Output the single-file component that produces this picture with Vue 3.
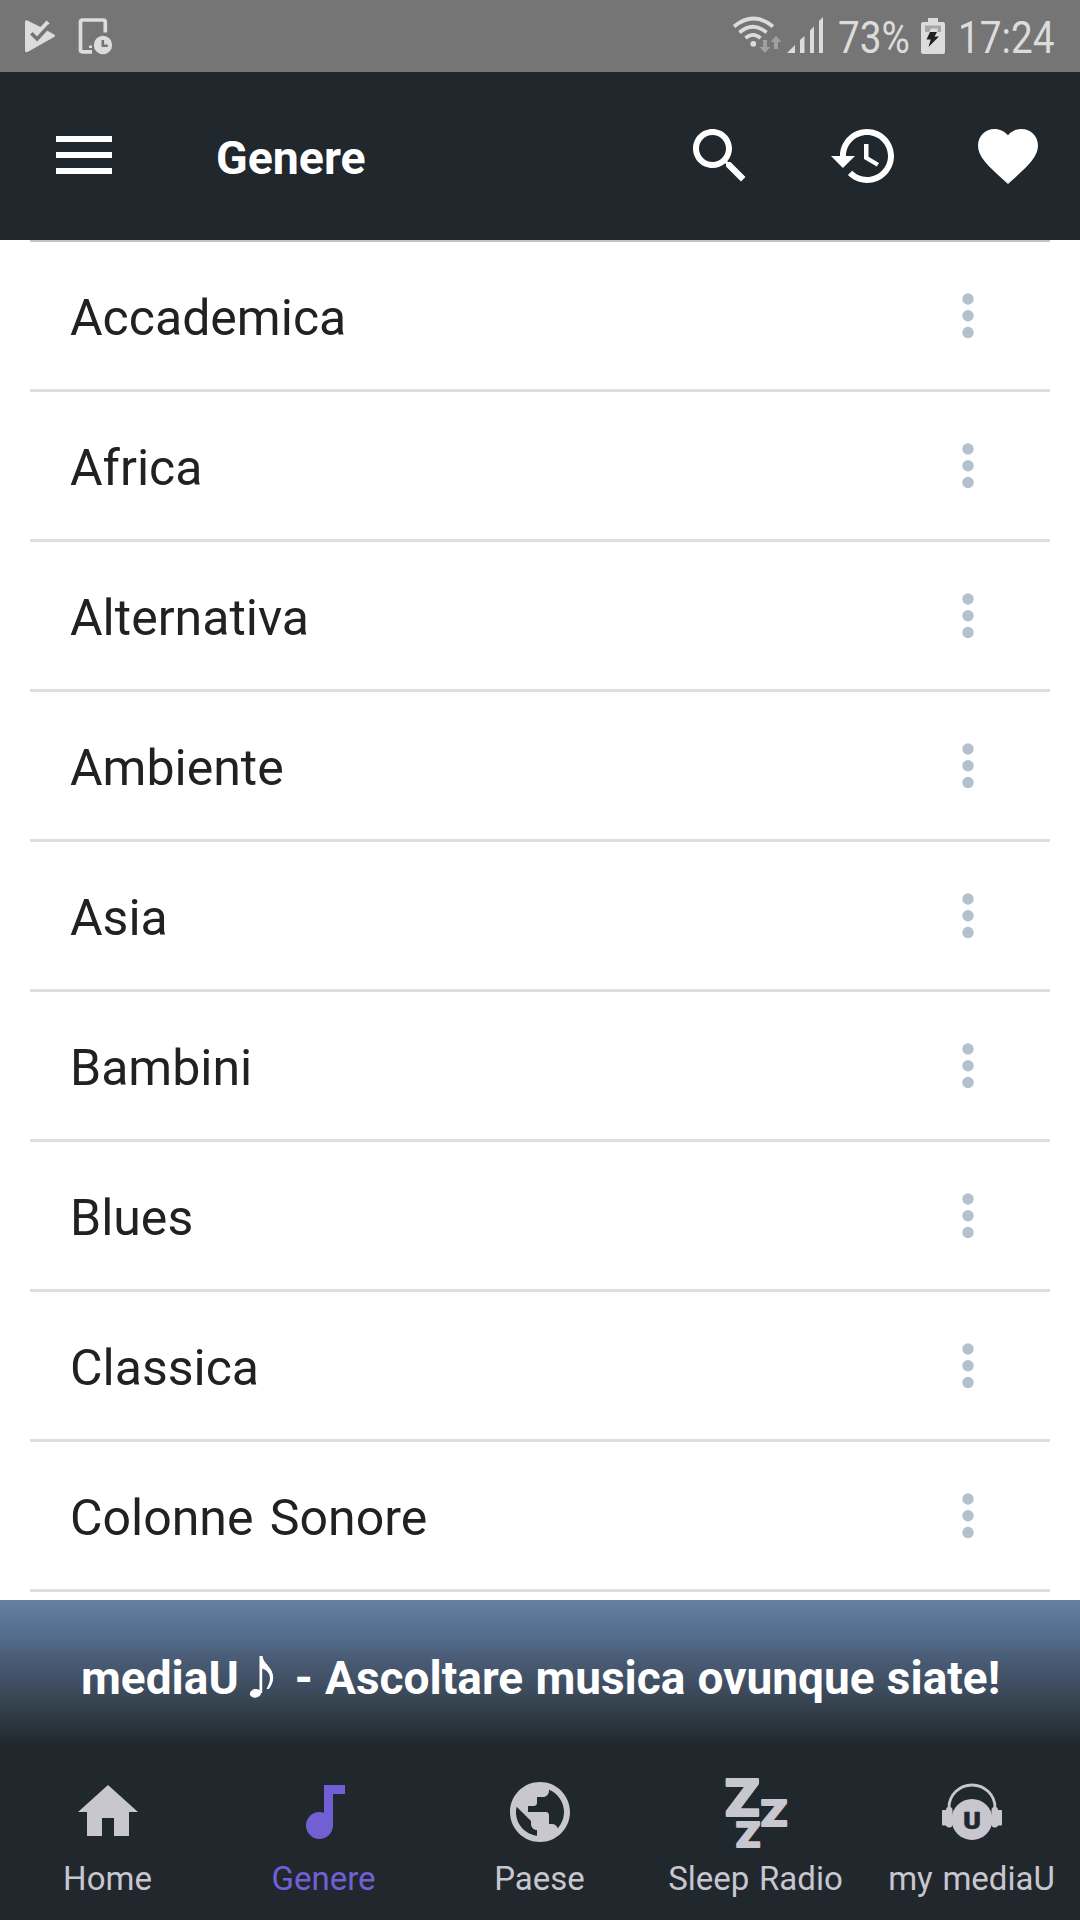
<template>
  <div class="app">
    <div class="status-bar">
      <svg class="status-left" width="120" height="72" viewBox="0 0 120 72">
        <path fill="#dcdcdc" d="M25 22q0-2.500 2.500-1.500L40.500 27l6-6.500 3 2.700-5 8.300 3-.8 7 4q1 1 0 2L28 51.800q-3 1.200-3-1.300z" />
        <path d="M31.300 33.300l5.800 5.700L49.500 25.500" fill="none" stroke="#757575" stroke-width="3.600" />
        <path d="M105.300 32.500v-10.500q0-2-2-2H82.500q-2 0-2 2V49.800q0 2 2 2H92" fill="none" stroke="#dcdcdc" stroke-width="3.700" />
        <circle cx="103" cy="45" r="9.200" fill="#dcdcdc" />
        <path d="M102.800 40v5.800h5" fill="none" stroke="#757575" stroke-width="2.600" />
        <rect x="89" y="45.500" width="3" height="2.500" fill="#dcdcdc" />
      </svg>
      <div class="status-right">
        <svg width="92" height="72" viewBox="732 0 92 72">
          <g fill="none" stroke="#dcdcdc" stroke-width="3.700">
            <path d="M734 26.500q19.500-16 39 0" />
            <path d="M739.500 32.500q13.500-11.500 27 0" />
            <path d="M745.500 38.200q7.500-6.500 15 0" />
          </g>
          <circle cx="753.300" cy="43.800" r="2.900" fill="#dcdcdc" />
          <path fill="#a0a0a0" d="M763 40h4v7h3.500l-5.500 6-5.500-6h3.500zM774 49h4v-7h3.500l-5.500-6-5.500 6h3.500z" />
          <path fill="#dcdcdc" d="M787 53l8-8v8zM800 53V40l4.500-4v17zM810 53V30.500l4-4V53zM819 53V21l4-4v36z" />
        </svg>
        <span class="status-text percent">73%</span>
        <svg class="battery" width="24" height="72" viewBox="921 0 24 72">
          <path fill="#dcdcdc" d="M928 18h10v4h5q2 0 2 2v28q0 2-2 2h-20q-2 0-2-2V24q0-2 2-2h5z" />
          <path fill="#a6a6a6" d="M925 25.500h16v6.500h-16z" />
          <path fill="#dcdcdc" d="M931 28.500h7l-1 4h-8z" />
          <path fill="#202020" d="M930 32h7l-2.500 4.500h4.500L928.500 47l2.200-7.500H926.500z" />
        </svg>
        <span class="status-text clock">17:24</span>
      </div>
    </div>

    <header class="toolbar">
      <svg class="menu" width="56" height="38" viewBox="0 0 56 38">
        <path fill="#fff" d="M0 0h56v6H0zM0 16h56v6H0zM0 32h56v6H0z" />
      </svg>
      <h1>Genere</h1>
      <div class="actions">
        <svg v-for="action in actions" :key="action.name" width="72" height="72" viewBox="0 0 24 24">
          <path fill="#fff" :d="action.path" />
        </svg>
      </div>
    </header>

    <ul class="genres">
      <li v-for="genre in genres" :key="genre">
        <span>{{ genre }}</span>
        <svg width="12" height="46" viewBox="0 0 12 46">
          <g fill="#b4c0cc">
            <circle cx="6" cy="6" r="5.700" />
            <circle cx="6" cy="22.800" r="5.700" />
            <circle cx="6" cy="39.500" r="5.700" />
          </g>
        </svg>
      </li>
    </ul>

    <div class="banner">
      <span>mediaU</span>
      <svg width="26" height="44" viewBox="0 0 26 44">
        <ellipse cx="6.500" cy="38.300" rx="5.700" ry="4.300" fill="#fff" transform="rotate(-12 6.500 38.300)" />
        <path fill="#fff" d="M10.500 1h3c.5 8 10.700 11 10.700 21.500 0 5-2.200 8.500-4.500 11.500h-2.200c2-4 3.500-7 3.500-10.500 0-5-3-8.500-7.800-10V38h-2.700z" />
      </svg>
      <span class="slogan">- Ascoltare musica ovunque siate!</span>
    </div>

    <nav class="tabs">
      <div v-for="tab in tabs" :key="tab.label" :class="['tab', { active: tab.label === current }]">
        <svg v-if="tab.path" width="72" height="72" viewBox="0 0 24 24">
          <path fill="currentColor" :d="tab.path" />
        </svg>
        <svg v-else-if="tab.icon === 'sleep'" class="letters" width="72" height="72" viewBox="0 0 72 72">
          <g fill="currentColor" stroke="currentColor" stroke-width="2" stroke-linejoin="round">
            <text x="5" y="40" font-size="51" textLength="34.500" lengthAdjust="spacingAndGlyphs">Z</text>
            <text x="41" y="50" font-size="36" textLength="26" lengthAdjust="spacingAndGlyphs">Z</text>
            <text x="16" y="71" font-size="35" textLength="24" lengthAdjust="spacingAndGlyphs">Z</text>
          </g>
        </svg>
        <svg v-else class="letters" width="72" height="72" viewBox="0 0 72 72">
          <path d="M13 33v-1.500a23 22.500 0 0 1 46 0V33" fill="none" stroke="currentColor" stroke-width="2.800" />
          <circle cx="36" cy="43.400" r="20.500" fill="currentColor" />
          <rect x="6" y="34" width="6" height="15.500" rx="1" fill="currentColor" />
          <rect x="10" y="31" width="6.500" height="20.500" rx="3" fill="currentColor" />
          <rect x="60" y="34" width="6" height="15.500" rx="1" fill="currentColor" />
          <rect x="55.500" y="31" width="6.500" height="20.500" rx="3" fill="currentColor" />
          <text x="27.200" y="52.700" font-size="24" textLength="17.600" lengthAdjust="spacingAndGlyphs" fill="#20272d" stroke="#20272d" stroke-width=".6">U</text>
        </svg>
        <span>{{ tab.label }}</span>
      </div>
    </nav>
  </div>
</template>

<script setup>
import { ref } from 'vue';

const current = ref('Genere');

const genres = [
  'Accademica',
  'Africa',
  'Alternativa',
  'Ambiente',
  'Asia',
  'Bambini',
  'Blues',
  'Classica',
  'Colonne Sonore'
];

const actions = [
  {
    name: 'search',
    path: 'M15.5 14h-.79l-.28-.27C15.41 12.59 16 11.11 16 9.5 16 5.91 13.09 3 9.5 3S3 5.91 3 9.5 5.91 16 9.5 16c1.61 0 3.09-.59 4.23-1.57l.27.28v.79l5 4.99L20.49 19l-4.99-5zm-6 0C7.01 14 5 11.99 5 9.5S7.01 5 9.5 5 14 7.01 14 9.5 11.99 14 9.5 14z'
  },
  {
    name: 'history',
    path: 'M13 3c-4.97 0-9 4.03-9 9H1l3.89 3.89.07.14L9 12H6c0-3.87 3.13-7 7-7s7 3.13 7 7-3.13 7-7 7c-1.93 0-3.68-.79-4.94-2.06l-1.42 1.42C8.27 19.99 10.51 21 13 21c4.97 0 9-4.03 9-9s-4.03-9-9-9zm-1 5v5l4.28 2.54.72-1.21-3.5-2.08V8H12z'
  },
  {
    name: 'favorite',
    path: 'M12 21.35l-1.45-1.32C5.4 15.36 2 12.28 2 8.5 2 5.42 4.42 3 7.5 3c1.74 0 3.41.81 4.5 2.09C13.09 3.81 14.76 3 16.5 3 19.58 3 22 5.42 22 8.5c0 3.78-3.4 6.86-8.55 11.54L12 21.35z'
  }
];

const tabs = [
  { label: 'Home', path: 'M10 20v-6h4v6h5v-8h3L12 3 2 12h3v8z' },
  {
    label: 'Genere',
    path: 'M12 3v9.28c-.47-.17-.97-.28-1.5-.28C8.01 12 6 14.01 6 16.5S8.01 21 10.5 21c2.31 0 4.2-1.75 4.45-4H15V6h4V3h-7z'
  },
  {
    label: 'Paese',
    path: 'M12 2C6.48 2 2 6.48 2 12s4.48 10 10 10 10-4.48 10-10S17.52 2 12 2zm-1 17.93c-3.95-.49-7-3.85-7-7.93 0-.62.08-1.21.21-1.79L9 15v1c0 1.1.9 2 2 2v1.93zm6.9-2.54c-.26-.81-1-1.39-1.9-1.39h-1v-3c0-.55-.45-1-1-1H8v-2h2c.55 0 1-.45 1-1V7h2c1.1 0 2-.9 2-2v-.41c2.93 1.19 5 4.06 5 7.41 0 2.08-.8 3.97-2.1 5.39z'
  },
  { label: 'Sleep Radio', icon: 'sleep' },
  { label: 'my mediaU', icon: 'headphones' }
];
</script>

<style>
body {
  margin: 0;
}
</style>

<style scoped>
.app {
  display: flex;
  flex-direction: column;
  width: 1080px;
  height: 1920px;
  overflow: hidden;
  background: #fff;
  font-family: Roboto, 'Liberation Sans', sans-serif;
}

svg {
  display: block;
  flex: none;
}

.status-bar {
  display: flex;
  justify-content: space-between;
  height: 72px;
  background: #757575;
}

.status-right {
  display: flex;
  align-items: center;
  padding-right: 24px;
}

.status-text {
  color: #dcdcdc;
  font-size: 44px;
  line-height: 72px;
  white-space: nowrap;
  transform: scaleX(0.88);
  transform-origin: left;
  padding-top: 3px;
}

.percent {
  width: 69px;
  margin-left: 14px;
}

.battery {
  margin-left: 14px;
}

.clock {
  width: 98px;
  margin-left: 13px;
}

.toolbar {
  display: flex;
  align-items: center;
  height: 168px;
  padding: 0 36px 0 56px;
  background: #20272d;
  color: #fff;
}

.menu {
  margin-bottom: 2px;
}

h1 {
  flex: 1;
  margin: 4px 0 0 104px;
  font-size: 46.5px;
  font-weight: 700;
  line-height: 56px;
}

.actions {
  display: flex;
  gap: 72px;
}

.genres {
  box-sizing: border-box;
  height: 1360px;
  margin: 0;
  padding: 0 30px;
  list-style: none;
}

.genres::before {
  content: '';
  display: block;
  height: 2px;
  background: #c1c3c4;
}

.genres li {
  display: flex;
  justify-content: space-between;
  align-items: center;
  box-sizing: border-box;
  height: 150px;
  padding: 0 76px 0 40px;
  border-bottom: 3px solid #dedede;
  color: #212121;
  font-size: 50px;
  word-spacing: 4px;
}

.genres span {
  padding-top: 4px;
}

.banner {
  display: flex;
  align-items: center;
  box-sizing: border-box;
  height: 160px;
  padding: 0 0 5px 81px;
  background: linear-gradient(#6481a4 0, #5a7697 18px, #536c8a 38px, #495b75 60px, #3a4858 95px, #2d3840 120px, #22292d 143px, #20272d 160px);
  color: #fff;
  font-size: 46px;
  font-weight: 700;
  white-space: nowrap;
}

.banner svg {
  margin: 0 0 2px 10px;
}

.slogan {
  margin-left: 20px;
  word-spacing: 0.8px;
}

.tabs {
  display: flex;
  height: 160px;
  background: #20272d;
}

.tab {
  display: flex;
  flex-direction: column;
  align-items: center;
  width: 216px;
  padding-top: 16px;
  color: #c8c6ce;
  font-size: 33px;
}

.tab.active {
  color: #725fd3;
}

.tab span {
  margin: 11px 1px 0 0;
  line-height: 40px;
  word-spacing: 1.5px;
}

.letters {
  overflow: visible;
}

.letters text {
  font-family: Roboto, 'Liberation Sans', sans-serif;
  font-weight: 900;
}
</style>
